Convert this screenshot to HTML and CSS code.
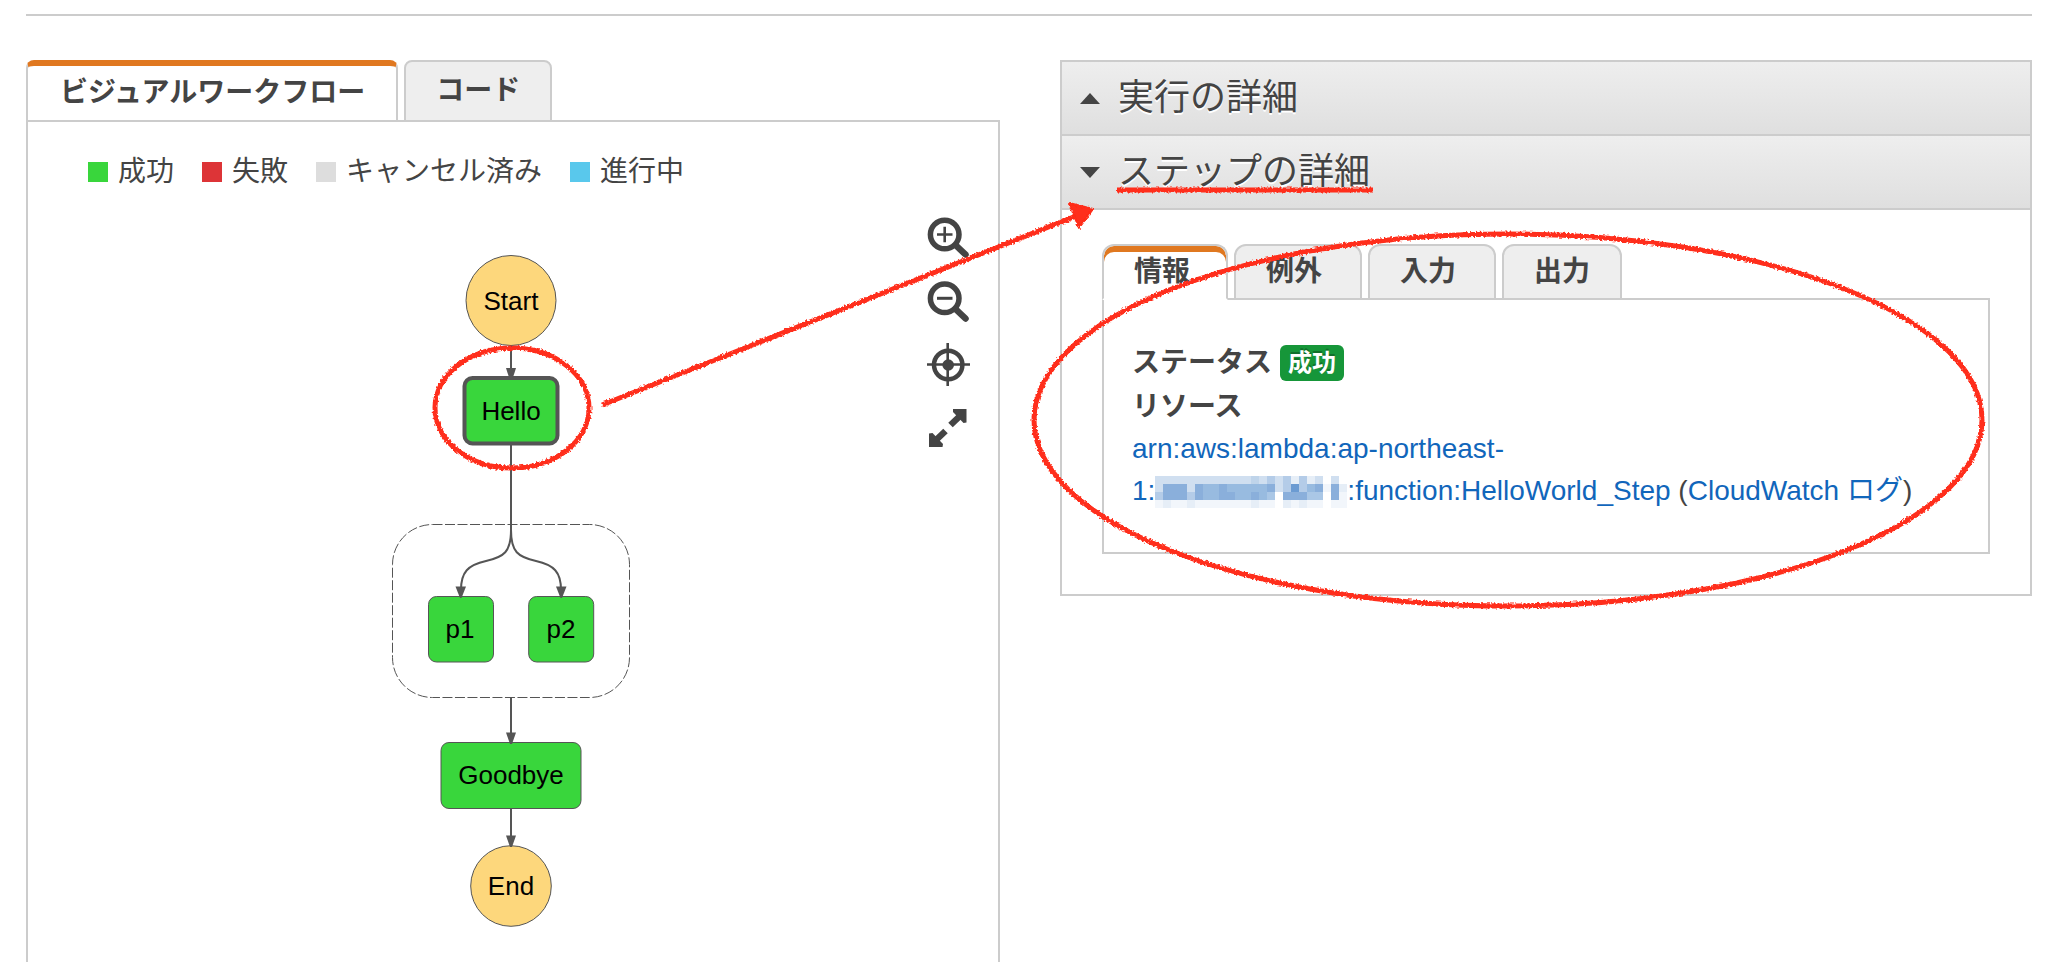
FILE: index.html
```html
<!DOCTYPE html>
<html lang="ja">
<head>
    <meta charset="UTF-8">
    <meta name="viewport" content="width=device-width, initial-scale=1.0">
    <title>Step Functions</title>
    <link rel="stylesheet" href="styles.css">
</head>
<body>
    <hr class="divider">
    <main class="columns">
        <section class="workflow">
            <div class="tabs" role="tablist">
                <button class="tab active" role="tab" aria-selected="true">ビジュアルワークフロー</button>
                <button class="tab" role="tab" aria-selected="false">コード</button>
            </div>
            <div class="workflow-panel">
                <ul class="legend">
                    <li class="legend-item"><span class="swatch success"></span>成功</li>
                    <li class="legend-item"><span class="swatch failed"></span>失敗</li>
                    <li class="legend-item"><span class="swatch cancelled"></span>キャンセル済み</li>
                    <li class="legend-item"><span class="swatch running"></span>進行中</li>
                </ul>
                <div class="stage">
                    <svg class="graph" width="240" height="720" viewBox="391 216 240 720">
                        <!-- edges -->
                        <g class="edge">
                            <path d="M511 345V370"/>
                            <path d="M511 445V535"/>
                            <path d="M511 530C511 552 504 557 486 561C468 565 461 572 461 590"/>
                            <path d="M511 530C511 552 518 557 536 561C554 565 561 572 561 590"/>
                            <path d="M511 698V735"/>
                            <path d="M511 808V838"/>
                        </g>
                        <rect class="group" x="392.500" y="524.500" width="237" height="173" rx="40"/>
                        <circle class="terminal" cx="511" cy="300.500" r="45"/>
                        <circle class="terminal" cx="511" cy="886" r="40.300"/>
                        <rect class="state selected" x="464.500" y="378" width="93" height="65.500" rx="8"/>
                        <rect class="state" x="428.500" y="596.500" width="65" height="65.500" rx="8"/>
                        <rect class="state" x="528.700" y="596.500" width="65" height="65.500" rx="8"/>
                        <rect class="state" x="441" y="742.500" width="140" height="66" rx="8"/>
                        <!-- arrow heads -->
                        <g class="head">
                            <path d="M506 368H516L512.500 379H509.500Z"/>
                            <path d="M455.500 586.500H466L461.500 598H460Z"/>
                            <path d="M556 586.500H566.500L562 598H560.500Z"/>
                            <path d="M506 732.500H516L512 744H510Z"/>
                            <path d="M506 835.500H516L512 847H510Z"/>
                        </g>
                        <g class="label">
                            <text x="511" y="310">Start</text>
                            <text x="511" y="420">Hello</text>
                            <text x="460" y="638">p1</text>
                            <text x="561" y="638">p2</text>
                            <text x="511" y="784">Goodbye</text>
                            <text x="511" y="895">End</text>
                        </g>
                    </svg>
                    <div class="controls">
                        <button class="control" aria-label="拡大">
                            <svg width="44" height="44" viewBox="0 0 44 44">
                                <circle cx="18.700" cy="18.500" r="14.300" stroke-width="5.500"/>
                                <path d="M11 18.500H26.500M18.700 10.800V26.200" stroke-width="2.600"/>
                                <path d="M30 29.500L39.500 38.500" stroke-width="6.500" stroke-linecap="round"/>
                            </svg>
                        </button>
                        <button class="control" aria-label="縮小">
                            <svg width="44" height="44" viewBox="0 0 44 44">
                                <circle cx="18.700" cy="18.300" r="14.300" stroke-width="5.500"/>
                                <path d="M11 18.300H26.500" stroke-width="3"/>
                                <path d="M30 29.500L39.500 38.500" stroke-width="6.500" stroke-linecap="round"/>
                            </svg>
                        </button>
                        <button class="control" aria-label="中央">
                            <svg width="44" height="44" viewBox="0 0 44 44">
                                <circle cx="22.200" cy="21" r="14.200" stroke-width="4.500"/>
                                <circle class="dot" cx="22.200" cy="21" r="5.800"/>
                                <path d="M1 20.500H44M21.700 -1V42" stroke-width="2.600"/>
                            </svg>
                        </button>
                        <button class="control" aria-label="全画面">
                            <svg width="44" height="44" viewBox="0 0 44 44">
                                <path d="M24.500 17L35 7M19.500 23L9 33" stroke-width="6.500"/>
                                <path class="solid" d="M27 1H40.500V14.500L37.500 15L27 4Z"/>
                                <path class="solid" d="M3 25.500L6.500 25L17 36L16.500 39H3Z"/>
                            </svg>
                        </button>
                    </div>
                </div>
            </div>
        </section>

        <section class="details">
            <button class="section-head" aria-expanded="false"><span class="caret up"></span>実行の詳細</button>
            <button class="section-head" aria-expanded="true"><span class="caret down"></span>ステップの詳細</button>
            <div class="section-body">
                <div class="tabs small" role="tablist">
                    <button class="tab active" role="tab" aria-selected="true">情報</button>
                    <button class="tab" role="tab" aria-selected="false">例外</button>
                    <button class="tab" role="tab" aria-selected="false">入力</button>
                    <button class="tab" role="tab" aria-selected="false">出力</button>
                </div>
                <div class="info">
                    <div class="info-row">ステータス<span class="badge">成功</span></div>
                    <div class="info-row">リソース</div>
                    <p class="resource">
                        <a class="link" href="#">arn:aws:lambda:ap-northeast-<br>1:<svg class="mosaic" id="mosaic" width="192" height="32" viewBox="0 0 24 4" shape-rendering="crispEdges"></svg>:function:HelloWorld_Step</a>
                        (<a class="link" href="#">CloudWatch ログ</a>)
                    </p>
                </div>
            </div>
        </section>
    </main>

    <!-- red pencil marks -->
    <svg class="marks" viewBox="0 0 2058 962">
        <filter id="pencil" filterUnits="userSpaceOnUse" x="0" y="0" width="2058" height="962">
            <feTurbulence type="fractalNoise" baseFrequency="0.5" numOctaves="2" seed="4"/>
            <feDisplacementMap in="SourceGraphic" scale="4" xChannelSelector="R" yChannelSelector="G"/>
        </filter>
        <g filter="url(#pencil)">
            <ellipse cx="512" cy="408" rx="77" ry="60"/>
            <ellipse cx="1508" cy="420" rx="474" ry="186"/>
            <path d="M602 405L1076 216"/>
            <path d="M1117 190H1373"/>
            <path class="tip" d="M1069 203L1093 209L1079 228Z"/>
        </g>
    </svg>

    <script>
        // masked account id, one letter per cell: . is empty, a is lightest
        const rows = [
            'ccccccccccccdcecebebc.c.',
            'chhhchgghggggghceieghahb',
            'ehhhehgghhgghgf.hhhff.ha',
            'abaabaaaaaaabaa.babaa.aa'
        ];
        const shades = {
            a: '#f2f6fb', b: '#e6eef7', c: '#d0dff0', d: '#bfd4ea',
            e: '#b4cce8', f: '#aac7e6', g: '#98bbe0', h: '#8aafdb', i: '#6b9bd2'
        };
        const mosaic = document.getElementById('mosaic');
        rows.forEach((row, y) => {
            [...row].forEach((cell, x) => {
                if (!shades[cell]) return;
                const rect = document.createElementNS('http://www.w3.org/2000/svg', 'rect');
                rect.setAttribute('x', x);
                rect.setAttribute('y', y);
                rect.setAttribute('width', 1);
                rect.setAttribute('height', 1);
                rect.setAttribute('fill', shades[cell]);
                mosaic.appendChild(rect);
            });
        });
    </script>
</body>
</html>
```
FILE: styles.css
```css
* {
    box-sizing: border-box;
}

body {
    display: flex;
    flex-direction: column;
    position: relative;
    min-height: 100vh;
    margin: 0;
    padding: 14px 26px 0;
    background: #fff;
    color: #444;
    font-family: "Liberation Sans", "Noto Sans CJK JP", sans-serif;
    font-size: 28px;
}

button {
    margin: 0;
    color: inherit;
    font: inherit;
    cursor: pointer;
}

.divider {
    width: 100%;
    margin: 0 0 44px;
    border: 0;
    border-top: 2px solid #ccc;
}

.columns {
    display: grid;
    grid-template-columns: calc(50% - 29px) 1fr;
    gap: 60px;
    flex: 1;
}

/* tabs */
.tabs {
    display: flex;
    gap: 6px;
    margin-bottom: -2px;
}

.tab {
    height: 62px;
    padding: 0 30px;
    border: 2px solid #ccc;
    border-radius: 8px 8px 0 0;
    background: #eee;
    font-weight: bold;
    line-height: 58px;
}

.tab.active {
    padding: 0 31px 0 32px;
    border-top: 6px solid #e07820;
    border-bottom-color: #fff;
    background: #fff;
    line-height: 48px;
}

.small .tab {
    height: 56px;
    padding: 0 38px 0 30px;
    border-radius: 12px 12px 0 0;
    line-height: 52px;
}

.small .tab.active {
    padding: 0 36px 0 30px;
    border-top: 2px solid #ccc;
    box-shadow: inset 0 6px #e07820;
}

.small .tab:last-child {
    padding-right: 30px;
}

/* workflow */
.workflow {
    display: flex;
    flex-direction: column;
}

.workflow-panel {
    flex: 1;
    padding-top: 30px;
    border: 2px solid #ccc;
    border-bottom: 0;
}

.legend {
    display: flex;
    gap: 28px;
    margin: 0 0 24px;
    padding: 0 60px;
    list-style: none;
    line-height: 40px;
}

.legend-item {
    display: flex;
    align-items: center;
    gap: 10px;
}

.swatch {
    width: 20px;
    height: 20px;
}

.success {
    background: #39d63c;
}

.failed {
    background: #dd3437;
}

.cancelled {
    background: #ddd;
}

.running {
    background: #59c8ec;
}

.stage {
    display: grid;
    grid-template-columns: 1fr auto 1fr;
    padding: 0 28px 0 24px;
}

.graph {
    grid-column: 2;
}

.edge {
    fill: none;
    stroke: #555;
    stroke-width: 2;
}

.head {
    fill: #555;
}

.group {
    fill: none;
    stroke: #555;
    stroke-dasharray: 10 2.5;
}

.terminal {
    fill: #fdd77c;
    stroke: #555;
}

.state {
    fill: #39d63c;
    stroke: #555;
}

.selected {
    stroke-width: 4;
}

.label {
    fill: #000;
    font-size: 26px;
    text-anchor: middle;
}

.controls {
    display: flex;
    flex-direction: column;
    gap: 20px;
    justify-self: end;
}

.control {
    width: 44px;
    height: 44px;
    padding: 0;
    border: 0;
    background: none;
}

.control svg {
    display: block;
    overflow: visible;
    fill: none;
    stroke: #444;
}

.control .dot,
.control .solid {
    fill: #444;
    stroke: none;
}

/* details */
.details {
    align-self: start;
    border: 2px solid #ccc;
}

.section-head {
    display: flex;
    align-items: center;
    gap: 18px;
    width: 100%;
    height: 74px;
    padding: 0 18px;
    border: 0;
    border-bottom: 2px solid #ccc;
    background: linear-gradient(#eee, #dfdfdf);
    font-size: 36px;
    line-height: 72px;
    text-shadow: 0 2px #fff;
}

.caret {
    border: 10px solid transparent;
}

.caret.up {
    border-top: 0;
    border-bottom: 11px solid #444;
}

.caret.down {
    border-top: 11px solid #444;
    border-bottom: 0;
}

.section-body {
    padding: 34px 40px 40px;
}

.info {
    padding: 40px 28px;
    border: 2px solid #ccc;
}

.info-row {
    display: flex;
    align-items: center;
    gap: 8px;
    padding-top: 2px;
    font-weight: bold;
    line-height: 42px;
}

.badge {
    padding: 0 8px;
    border-radius: 6px;
    background: #169639;
    color: #fff;
    font-size: 24px;
    line-height: 36px;
    text-shadow: 0 -2px rgba(0, 0, 0, 0.25);
}

.resource {
    margin: 0;
    line-height: 42px;
}

.link {
    color: #16b;
    text-decoration: none;
}

.mosaic {
    margin: -8px 0;
    vertical-align: 0;
}

/* hand-drawn marks lie over the whole page */
.marks {
    position: absolute;
    top: 0;
    left: 0;
    width: 100%;
    pointer-events: none;
    fill: none;
    stroke: #ff2d1a;
    stroke-width: 5;
}

.tip {
    fill: #ff2d1a;
    stroke-width: 2;
    stroke-linejoin: round;
}
```
